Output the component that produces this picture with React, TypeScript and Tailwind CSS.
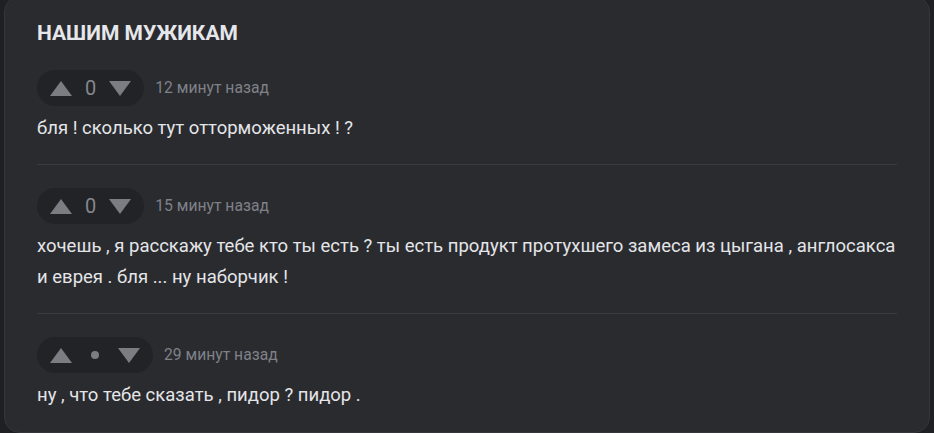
import React from "react";

function Up() {
  return (
    <svg width="22" height="15" viewBox="0 0 22 15" className="block">
      <path d="M11 0 L22 15 L0 15 Z" fill="#7b7d83" />
    </svg>
  );
}
function Down() {
  return (
    <svg width="22" height="15" viewBox="0 0 22 15" className="block">
      <path d="M0 0 L22 0 L11 15 Z" fill="#7b7d83" />
    </svg>
  );
}

type C = { score: string | null; time: string; text: string; last?: boolean };

const comments: C[] = [
  { score: "0", time: "12 минут назад", text: "бля ! сколько тут отторможенных ! ?" },
  {
    score: "0",
    time: "15 минут назад",
    text:
      "хочешь , я расскажу тебе кто ты есть ? ты есть продукт протухшего замеса из цыгана , англосакса и еврея . бля ... ну наборчик !",
  },
  { score: null, time: "29 минут назад", text: "ну , что тебе сказать , пидор ? пидор .", last: true },
];

export default function App() {
  return (
    <div
      className="w-[934px] h-[433px] overflow-hidden bg-[#1f2023] px-1 pb-1"
      style={{ fontFamily: "Roboto, 'Noto Sans', sans-serif" }}
    >
      <div className="-mt-1 h-[437px] rounded-2xl border border-[#35363b] bg-[#2a2b2f] px-[32px] pt-[22px]">
        <h1 className="text-[21px] leading-[28px] font-bold text-[#e6e7ea]">НАШИМ МУЖИКАМ</h1>
        {comments.map((c, i) => (
          <div
            key={i}
            className={
              c.last ? "pt-[23px] pb-5" : "pt-[23px] pb-5 border-b border-[#3a3b40]"
            }
          >
            <div className="flex items-center gap-[11px]">
              <div className="flex h-9 items-center gap-[13px] rounded-full bg-[#222326] px-[13px]">
                <Up />
                {c.score !== null ? (
                  <span className="text-[20px] leading-none text-[#85878d]">{c.score}</span>
                ) : (
                  <span className="flex w-5 justify-center">
                    <span className="block h-2 w-2 rounded-full bg-[#7b7d83]" />
                  </span>
                )}
                <Down />
              </div>
              <span className="text-[15.7px] text-[#7f8188]">{c.time}</span>
            </div>
            <p className="mt-[7px] text-[18.5px] leading-[31px] text-[#e4e5e8]">{c.text}</p>
          </div>
        ))}
      </div>
    </div>
  );
}
